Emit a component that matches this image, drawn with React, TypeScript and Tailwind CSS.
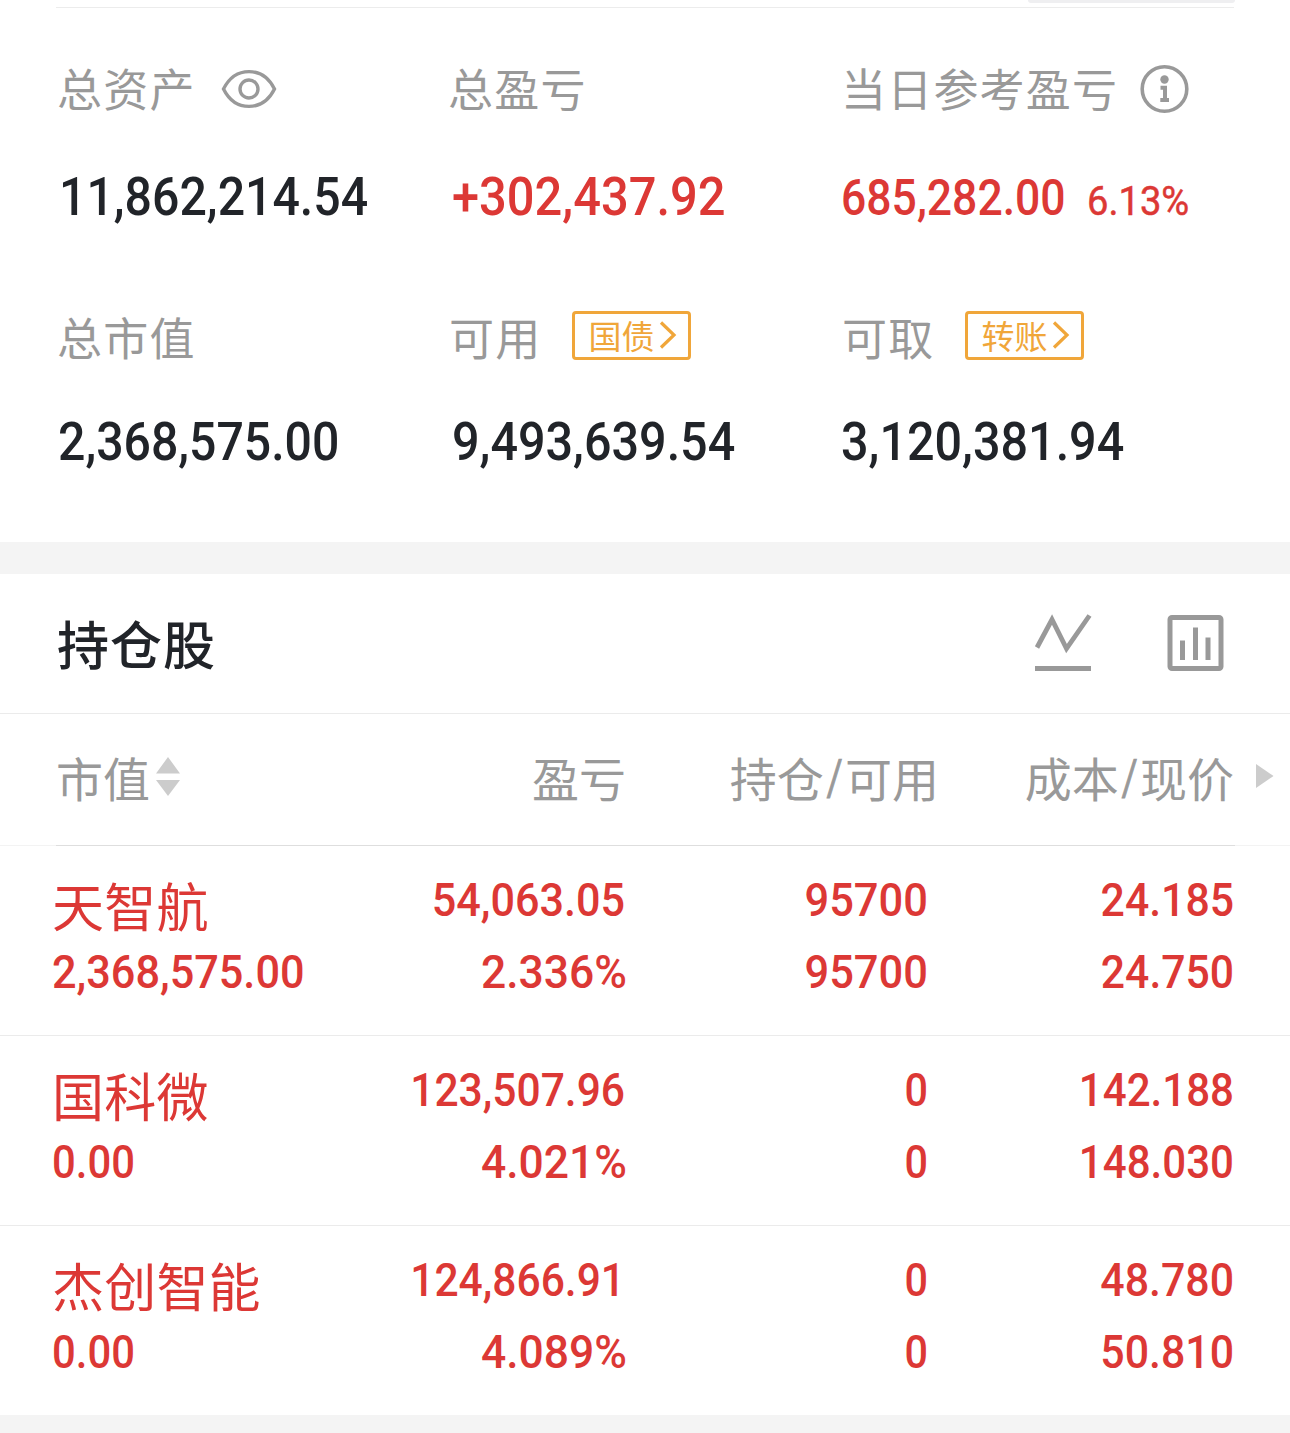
import React from "react";

type Cell = { text: string; fit: string };
type Stock = { name: string; value: Cell; cells: [Cell, Cell][] };

const stocks: Stock[] = [
  {
    name: "天智航",
    value: { text: "2,368,575.00", fit: "scale-x-[0.92]" },
    cells: [
      [{ text: "54,063.05", fit: "scale-x-[0.918]" }, { text: "2.336%", fit: "scale-x-[0.945] translate-x-[2px]" }],
      [{ text: "95700", fit: "scale-x-[0.925]" }, { text: "95700", fit: "scale-x-[0.925]" }],
      [{ text: "24.185", fit: "scale-x-[0.91]" }, { text: "24.750", fit: "scale-x-[0.908]" }],
    ],
  },
  {
    name: "国科微",
    value: { text: "0.00", fit: "scale-x-[0.89]" },
    cells: [
      [{ text: "123,507.96", fit: "scale-x-[0.905]" }, { text: "4.021%", fit: "scale-x-[0.945] translate-x-[2px]" }],
      [{ text: "0", fit: "scale-x-[0.88]" }, { text: "0", fit: "scale-x-[0.88]" }],
      [{ text: "142.188", fit: "scale-x-[0.895]" }, { text: "148.030", fit: "scale-x-[0.895]" }],
    ],
  },
  {
    name: "杰创智能",
    value: { text: "0.00", fit: "scale-x-[0.89]" },
    cells: [
      [{ text: "124,866.91", fit: "scale-x-[0.905]" }, { text: "4.089%", fit: "scale-x-[0.945] translate-x-[2px]" }],
      [{ text: "0", fit: "scale-x-[0.88]" }, { text: "0", fit: "scale-x-[0.88]" }],
      [{ text: "48.780", fit: "scale-x-[0.912]" }, { text: "50.810", fit: "scale-x-[0.912]" }],
    ],
  },
];

function Label({ children }: { children: React.ReactNode }) {
  return (
    <span className="font-['Noto_Sans_CJK_SC',sans-serif] text-[45px] leading-[60px] tracking-[1.2px] text-[#999999]">
      {children}
    </span>
  );
}

function Amount({ children, className }: { children: string; className: string }) {
  return (
    <span className={`origin-left text-[53px] leading-[60px] font-medium ${className}`}>{children}</span>
  );
}

function Tag({ children }: { children: string }) {
  return (
    <span className="mb-[4px] flex h-[49px] w-[119px] items-center rounded-[4px] border-[3px] border-[#f0a63a] pl-[13px] font-['Noto_Sans_CJK_SC',sans-serif] text-[33px] leading-[40px] text-[#f0a63a]">
      <span>{children}</span>
      <svg className="ml-[5px] h-7 w-[18px]" viewBox="0 0 18 28" fill="none" stroke="currentColor" strokeWidth="3.2">
        <path d="M2 1.5 L15 14 L2 26.5" />
      </svg>
    </span>
  );
}

function Summary() {
  return (
    <section className="h-[542px] px-14">
      <div className="flex h-2 items-start justify-end border-b border-[#ececec]">
        <div className="-mr-px h-[3px] w-[207px] rounded-b-[6px] bg-[#efeff1]" />
      </div>
      <div className="grid grid-cols-[392px_392px_394px] pt-[50px]">
        <div className="flex h-[60px] items-center pl-px">
          <Label>总资产</Label>
          <svg className="mt-[2px] ml-[25px] h-10 w-[56px]" viewBox="0 0 56 40" fill="none" stroke="#999999" strokeWidth="3.4">
            <path d="M2.5 20 C8 9 17 2.6 28 2.6 S48 9 53.5 20 C48 31 39 37.4 28 37.4 S8 31 2.5 20Z" />
            <circle cx="28" cy="20" r="9" />
          </svg>
        </div>
        <div className="flex h-[60px] items-center"><Label>总盈亏</Label></div>
        <div className="flex h-[60px] items-center pl-px">
          <Label>当日参考盈亏</Label>
          <svg className="mt-[2px] ml-[21px] size-[50px]" viewBox="0 0 50 50" fill="none" stroke="#999999">
            <circle cx="25.5" cy="25" r="22.3" strokeWidth="3.6" />
            <circle cx="25.5" cy="15.5" r="4.2" fill="#999999" stroke="none" />
            <path d="M21.5 23.8H26V36M21.3 36H30" strokeWidth="4" />
          </svg>
        </div>
      </div>
      <div className="grid grid-cols-[392px_392px_394px] pt-[49px]">
        <Amount className="translate-x-[3px] scale-x-[0.91] text-[#212429]">11,862,214.54</Amount>
        <Amount className="translate-x-[4px] scale-x-[0.921] text-[#dc3835]">+302,437.92</Amount>
        <div className="flex items-baseline font-medium text-[#dc3835]">
          <span className="w-[246px] origin-left translate-x-px scale-x-[0.89] text-[50px] leading-[62px]">685,282.00</span>
          <span className="origin-left translate-x-px scale-x-[0.93] text-[41px] leading-[60px] font-normal [-webkit-text-stroke:0.5px_currentColor]">6.13%</span>
        </div>
      </div>
      <div className="grid grid-cols-[392px_392px_394px] pt-[76px]">
        <div className="flex h-[60px] items-center pl-px"><Label>总市值</Label></div>
        <div className="flex h-[60px] items-center gap-[31px] pl-px"><Label>可用</Label><Tag>国债</Tag></div>
        <div className="flex h-[60px] items-center gap-[31px] pl-[2px]"><Label>可取</Label><Tag>转账</Tag></div>
      </div>
      <div className="grid grid-cols-[392px_392px_394px] pt-[45px]">
        <Amount className="translate-x-[2px] scale-x-[0.909] text-[#212429]">2,368,575.00</Amount>
        <Amount className="translate-x-[4px] scale-x-[0.915] text-[#212429]">9,493,639.54</Amount>
        <Amount className="translate-x-px scale-x-[0.915] text-[#212429]">3,120,381.94</Amount>
      </div>
    </section>
  );
}

function Heading({ left, right }: { left: string; right: string }) {
  return (
    <span className="flex items-center justify-end whitespace-nowrap">
      {left}
      <span className="mx-[2.8px] mb-[6px] text-[40px] [-webkit-text-stroke:0.8px_currentColor]">/</span>
      {right}
    </span>
  );
}

export default function App() {
  return (
    <div className="h-[1433px] w-[1290px] overflow-hidden bg-white font-['Roboto','Noto_Sans_CJK_SC',sans-serif]">
      <Summary />
      <div className="h-8 bg-[#f4f4f4]" />
      <section>
        <header className="flex h-[140px] items-center border-b border-[#ebebeb] pr-[66px] pl-[57px]">
          <h2 className="mb-[2px] flex-1 font-['Noto_Sans_CJK_SC',sans-serif] text-[52px] leading-[70px] font-medium tracking-[1px] text-[#212429]">
            持仓股
          </h2>
          <svg className="h-[60px] w-[58px]" viewBox="0 0 58 60" fill="none" stroke="#999999" strokeWidth="4.8">
            <path d="M3 33.5 L18 5.5 L32.5 34.5 L55.5 1.5" />
            <path d="M1 54.5H57" strokeWidth="5" />
          </svg>
          <svg className="ml-[75px] size-[57px]" viewBox="0 0 57 57" fill="none" stroke="#999999" strokeWidth="5">
            <rect x="3" y="2.5" width="51" height="51" rx="2" />
            <path d="M15.5 25.5V45M28.5 12.5V45M41 22.5V45" />
          </svg>
        </header>
        <div className="flex h-[132px] items-center border-b border-[#f3f3f3] pl-14 font-['Noto_Sans_CJK_SC',sans-serif] text-[47px] leading-[64px] text-[#999999]">
          <div className="flex h-[132px] w-[1179px] items-center border-b border-[#dedede] pb-[4px]">
            <div className="flex w-[262px] items-center gap-[6px]">
              <span>市值</span>
              <svg className="h-10 w-6" viewBox="0 0 24 40" fill="#cccccc">
                <path d="M12 0L24 16.5H0ZM0 23H24L12 39Z" />
              </svg>
            </div>
            <div className="w-[308px] text-right">盈亏</div>
            <div className="w-[313px]"><Heading left="持仓" right="可用" /></div>
            <div className="w-[295px]"><Heading left="成本" right="现价" /></div>
          </div>
          <svg className="mb-[7px] ml-[21px] h-6 w-[18px]" viewBox="0 0 18 24" fill="#cccccc">
            <path d="M0 0L17.5 12L0 24Z" />
          </svg>
        </div>
        {stocks.map((s, i) => (
          <div
            key={s.name}
            className={`grid grid-cols-[262px_311px_303px_306px] content-start pt-[18px] pl-[52px] text-[47px] font-medium text-[#dc3835] ${i < 2 ? "h-[190px] border-b border-[#ebebeb]" : "h-[189px]"}`}
          >
            <div className="flex flex-col whitespace-nowrap">
              <span className="h-[72px] pt-[6px] font-['Noto_Sans_CJK_SC',sans-serif] text-[52px] leading-[70px] font-normal tracking-[0.2px]">
                {s.name}
              </span>
              <span className={`origin-left leading-[72px] ${s.value.fit}`}>{s.value.text}</span>
            </div>
            {s.cells.map((pair, k) => (
              <div key={k} className="flex flex-col text-right leading-[72px]">
                {pair.map((c, j) => (
                  <span key={j} className={`origin-right ${c.fit}`}>{c.text}</span>
                ))}
              </div>
            ))}
          </div>
        ))}
      </section>
      <div className="h-[18px] bg-[#f4f4f4]" />
    </div>
  );
}
